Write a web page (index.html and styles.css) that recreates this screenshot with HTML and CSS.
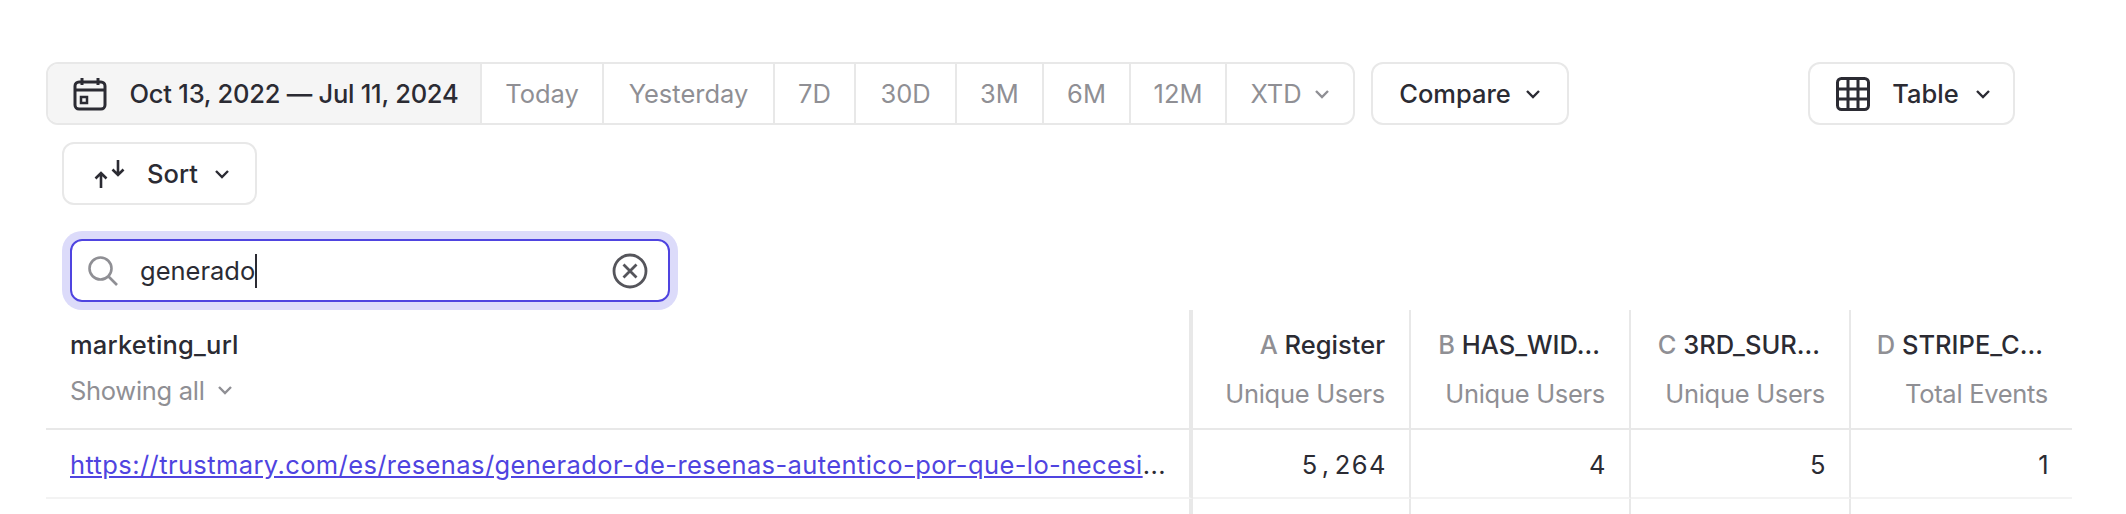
FILE: index.html
```html
<!DOCTYPE html>
<html lang="en">
<head>
    <meta charset="UTF-8">
    <title>Insights</title>
    <link rel="stylesheet" href="styles.css">
</head>
<body>
    <div class="toolbar">
        <div class="date-bar">
            <div class="seg seg-date">
                <svg class="icon" viewBox="0 0 34 34" fill="none" stroke="#2b2b33" stroke-width="3">
                    <rect x="2" y="5" width="30" height="27" rx="4"/>
                    <path d="M2 13h30M9 1v7M25 1v7"/>
                    <rect x="8" y="20" width="6" height="6" stroke-width="2.5"/>
                </svg>
                <span>Oct 13, 2022 — Jul 11, 2024</span>
            </div>
            <div class="seg w-today">Today</div>
            <div class="seg w-yesterday">Yesterday</div>
            <div class="seg w-7d">7D</div>
            <div class="seg w-30d">30D</div>
            <div class="seg w-3m">3M</div>
            <div class="seg w-6m">6M</div>
            <div class="seg w-12m">12M</div>
            <div class="seg w-xtd">XTD
                <svg class="chev" viewBox="0 0 16 10" fill="none" stroke="#8f8f94" stroke-width="2.4"><path d="M2 2l6 6 6-6"/></svg>
            </div>
        </div>
        <button class="btn btn-compare">Compare
            <svg class="chev" viewBox="0 0 16 10" fill="none" stroke="#2b2b33" stroke-width="2.4"><path d="M2 2l6 6 6-6"/></svg>
        </button>
        <button class="btn btn-table">
            <svg class="icon" viewBox="0 0 34 34" fill="none" stroke="#2b2b33" stroke-width="3">
                <rect x="1.5" y="1.5" width="31" height="31" rx="4"/>
                <path d="M12 2v30M22 2v30M2 12h30M2 22h30"/>
            </svg>
            <span>Table</span>
            <svg class="chev" viewBox="0 0 16 10" fill="none" stroke="#2b2b33" stroke-width="2.4"><path d="M2 2l6 6 6-6"/></svg>
        </button>
    </div>

    <div class="toolbar-second">
        <button class="btn btn-sort">
            <svg class="icon-sort" viewBox="0 0 34 30" fill="none" stroke="#2b2b33" stroke-width="2.6">
                <path d="M8 29V14M2.500 19.500L8 14l5.500 5.500M25 1v15M19.500 10.500L25 16l5.500-5.500"/>
            </svg>
            <span>Sort</span>
            <svg class="chev" viewBox="0 0 16 10" fill="none" stroke="#2b2b33" stroke-width="2.4"><path d="M2 2l6 6 6-6"/></svg>
        </button>
    </div>

    <div class="search-box">
        <svg class="icon-search" viewBox="0 0 30 30" fill="none" stroke="#8f8f94" stroke-width="2.6">
            <circle cx="12.500" cy="12.500" r="11"/>
            <path d="M20.500 20.500L29 29"/>
        </svg>
        <span class="search-text">generado</span><span class="caret"></span>
        <svg class="icon-clear" viewBox="0 0 36 36" fill="none" stroke="#55555b" stroke-width="2.8">
            <circle cx="18" cy="18" r="16"/>
            <path d="M11.500 11.500l13 13M24.500 11.500l-13 13"/>
        </svg>
    </div>

    <div class="grid">
        <div class="cell head first">
            <div class="title">marketing_url</div>
            <div class="sub">Showing all
                <svg class="chev" viewBox="0 0 16 10" fill="none" stroke="#8f8f94" stroke-width="2.4"><path d="M2 2l6 6 6-6"/></svg>
            </div>
        </div>
        <div class="cell head num">
            <div class="title"><span class="letter">A</span> Register</div>
            <div class="sub">Unique Users</div>
        </div>
        <div class="cell head num">
            <div class="title trunc"><span class="letter">B</span> HAS_WID...</div>
            <div class="sub">Unique Users</div>
        </div>
        <div class="cell head num">
            <div class="title trunc"><span class="letter">C</span> 3RD_SUR...</div>
            <div class="sub">Unique Users</div>
        </div>
        <div class="cell head num">
            <div class="title trunc"><span class="letter">D</span> STRIPE_C...</div>
            <div class="sub">Total Events</div>
        </div>

        <div class="cell row first">
            <span class="url-wrap"><a class="url" href="#">https://trustmary.com/es/resenas/generador-de-resenas-autentico-por-que-lo-necesi</a>...</span>
        </div>
        <div class="cell row num value">5<span class="comma">,</span>264</div>
        <div class="cell row num value">4</div>
        <div class="cell row num value">5</div>
        <div class="cell row num value">1</div>

        <div class="cell row first"></div>
        <div class="cell row"></div>
        <div class="cell row"></div>
        <div class="cell row"></div>
        <div class="cell row"></div>
    </div>
</body>
</html>
```

FILE: styles.css
```css
* {
    box-sizing: border-box;
}

body {
    margin: 0;
    padding: 62px 0 0 46px;
    height: 514px;
    overflow: hidden;
    background-color: #fff;
    font-family: 'Inter', sans-serif;
    font-size: 25.5px;
    color: #2b2b33;
}

.toolbar {
    display: flex;
    gap: 16px;
    height: 63px;
    width: 1969px;
}

.date-bar {
    display: flex;
    flex-shrink: 0;
    width: 1309px;
    border: 2px solid #e8e8e8;
    border-radius: 12px;
    color: #8f8f94;
    overflow: hidden;
}

.seg {
    display: flex;
    align-items: center;
    justify-content: center;
    gap: 12px;
    border-right: 2px solid #e8e8e8;
}

.seg:last-child {
    border-right: none;
}

.seg-date {
    width: 434px;
    gap: 23px;
    padding-left: 3px;
    background-color: #f5f5f5;
    color: #2b2b33;
    font-weight: 500;
    letter-spacing: -0.25px;
}

.w-today { width: 122px; }
.w-yesterday { width: 171px; }
.w-7d { width: 81px; }
.w-30d { width: 101px; }
.w-3m { width: 87px; }
.w-6m { width: 87px; }
.w-12m { width: 96px; }
.w-xtd { flex: 1; }

.icon {
    width: 34px;
    height: 34px;
    flex-shrink: 0;
}

.chev {
    width: 16px;
    height: 10px;
    flex-shrink: 0;
}

.btn {
    display: flex;
    align-items: center;
    justify-content: center;
    gap: 14px;
    height: 63px;
    padding: 0;
    border: 2px solid #e8e8e8;
    border-radius: 12px;
    background-color: #fff;
    font: inherit;
    font-weight: 500;
    color: inherit;
}

.btn-compare {
    width: 198px;
    flex-shrink: 0;
}

.btn-table {
    width: 207px;
    flex-shrink: 0;
    margin-left: auto;
    padding-left: 4px;
    gap: 22px;
}

.btn-table .chev {
    margin-left: -6px;
}

.toolbar-second {
    margin-top: 17px;
    padding-left: 16px;
}

.btn-sort {
    width: 195px;
    gap: 20px;
    justify-content: flex-start;
    padding-left: 29px;
}

.btn-sort .chev {
    margin-left: -4px;
}

.icon-sort {
    width: 34px;
    height: 30px;
}

.search-box {
    display: flex;
    align-items: center;
    width: 600px;
    height: 63px;
    margin: 34px 0 0 24px;
    padding: 0 20px 0 16px;
    border: 2px solid #4f44e0;
    border-radius: 12px;
    box-shadow: 0 0 0 8px #dcdbfa;
}

.icon-search {
    width: 30px;
    height: 30px;
    margin-right: 22px;
}

.search-text {
    color: #2b2b33;
}

.caret {
    width: 2px;
    height: 34px;
    background-color: #2b2b33;
}

.icon-clear {
    width: 36px;
    height: 36px;
    margin-left: auto;
}

.grid {
    display: grid;
    grid-template-columns: 1147px 218px 220px 220px 221px;
    grid-template-rows: 120px 69px 69px;
    width: 2026px;
    margin-top: 8px;
}

.cell {
    border-right: 2px solid #e8e8e8;
    border-bottom: 2px solid #e8e8e8;
}

.cell:nth-child(5n) {
    border-right: none;
}

.first {
    border-right-width: 4px;
    padding-left: 24px;
    padding-right: 24px;
}

.head {
    padding-top: 18px;
}

.num {
    padding-right: 24px;
    text-align: right;
}

.title {
    height: 34px;
    line-height: 34px;
    font-weight: 500;
    white-space: nowrap;
}

.first .title {
    letter-spacing: 0.2px;
}

.trunc {
    padding-right: 5px;
}

.sub {
    display: flex;
    align-items: center;
    gap: 12px;
    height: 34px;
    margin-top: 11px;
    color: #8f8f94;
    letter-spacing: -0.3px;
}

.num .sub {
    justify-content: flex-end;
    margin-top: 14px;
}

.letter {
    color: #8f8f94;
}

.row {
    display: flex;
    align-items: center;
    padding-top: 2px;
    border-bottom-color: #f3f3f3;
}

.row.num {
    justify-content: flex-end;
}

.url-wrap {
    white-space: nowrap;
    letter-spacing: 0.4px;
}

.url {
    color: #4f44e0;
}

.value {
    letter-spacing: 1.500px;
    padding-right: 22px;
}

.comma {
    margin: 0 4px 0 3px;
}
```
